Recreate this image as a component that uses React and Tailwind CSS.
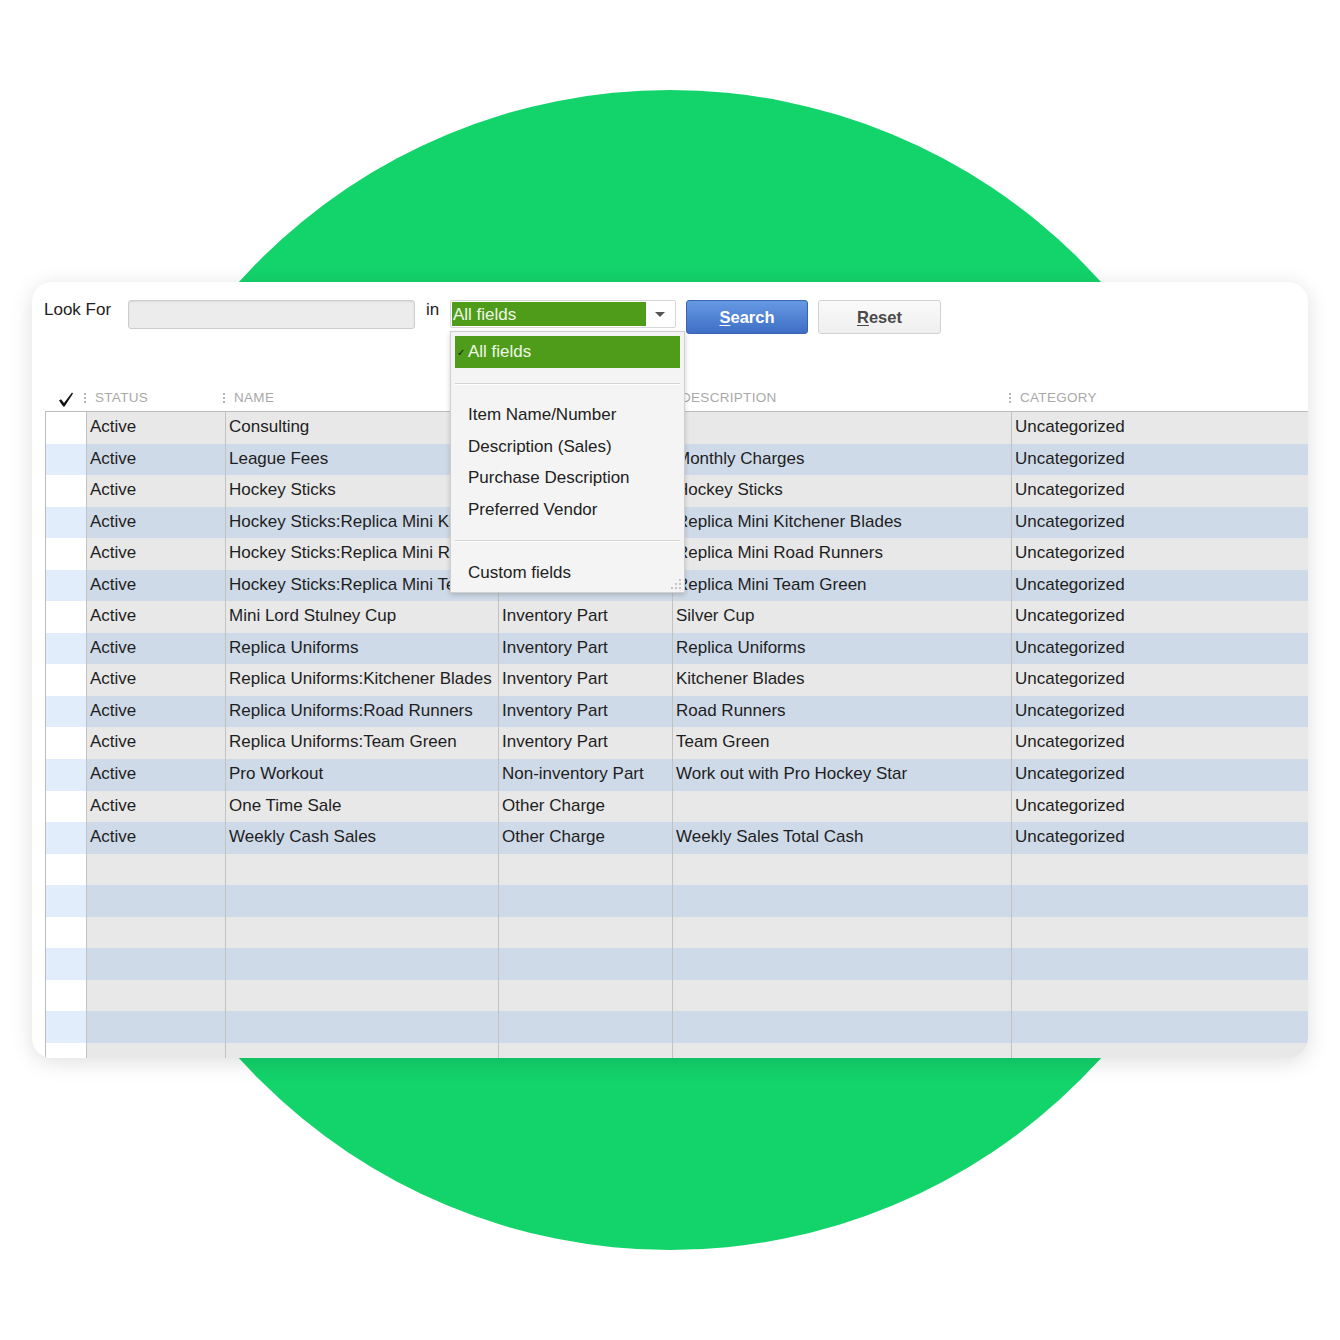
import React from 'react';

const rows = [
    ['Active', 'Consulting', 'Service', ''],
    ['Active', 'League Fees', 'Service', 'Monthly Charges'],
    ['Active', 'Hockey Sticks', 'Inventory Part', 'Hockey Sticks'],
    ['Active', 'Hockey Sticks:Replica Mini Kitchener Blades', 'Inventory Part', 'Replica Mini Kitchener Blades'],
    ['Active', 'Hockey Sticks:Replica Mini Road Runners', 'Inventory Part', 'Replica Mini Road Runners'],
    ['Active', 'Hockey Sticks:Replica Mini Team Green', 'Inventory Part', 'Replica Mini Team Green'],
    ['Active', 'Mini Lord Stulney Cup', 'Inventory Part', 'Silver Cup'],
    ['Active', 'Replica Uniforms', 'Inventory Part', 'Replica Uniforms'],
    ['Active', 'Replica Uniforms:Kitchener Blades', 'Inventory Part', 'Kitchener Blades'],
    ['Active', 'Replica Uniforms:Road Runners', 'Inventory Part', 'Road Runners'],
    ['Active', 'Replica Uniforms:Team Green', 'Inventory Part', 'Team Green'],
    ['Active', 'Pro Workout', 'Non-inventory Part', 'Work out with Pro Hockey Star'],
    ['Active', 'One Time Sale', 'Other Charge', ''],
    ['Active', 'Weekly Cash Sales', 'Other Charge', 'Weekly Sales Total Cash'],
];

const emptyRows = 7;
const cols = "grid grid-cols-[40px_139px_273px_174px_339px_1fr]";

function Divider() {
    // the little dotted grip between header labels
    return (
        <span className="flex flex-col gap-[2px] -ml-[2px] mr-[9px]">
            <span className="block w-[2px] h-[2px] bg-[#b4b4b4]"></span>
            <span className="block w-[2px] h-[2px] bg-[#b4b4b4]"></span>
            <span className="block w-[2px] h-[2px] bg-[#b4b4b4]"></span>
        </span>
    );
}

function HeaderCell({ label }) {
    return (
        <div className="flex items-center pt-[2px]">
            <Divider />
            <span className="text-[13.5px] tracking-[0.3px] text-[#a9a9a9] uppercase">{label}</span>
        </div>
    );
}

function Row({ data, idx }) {
    const even = idx % 2 === 1;
    const bg = even ? 'bg-[#cfdae8]' : 'bg-[#e8e8e8]';
    const cell = "border-l border-[#c2c2c2] pl-[3px] pb-[2px] flex items-center whitespace-nowrap overflow-hidden";
    return (
        <div className={`${cols} h-[31.55px] text-[17px] text-[#1e1e1e]`}>
            <div className={even ? 'bg-[#e1edfb]' : 'bg-white'}></div>
            <div className={`${cell} ${bg}`}>{data ? data[0] : ''}</div>
            <div className={`${cell} ${bg}`}>{data ? data[1] : ''}</div>
            <div className={`${cell} ${bg}`}>{data ? data[2] : ''}</div>
            <div className={`${cell} ${bg}`}>{data ? data[3] : ''}</div>
            <div className={`${cell} ${bg}`}>{data ? 'Uncategorized' : ''}</div>
        </div>
    );
}

export default function App() {
    const allRows = [...rows, ...Array(emptyRows).fill(null)];

    return (
        <div className="relative w-[1340px] h-[1340px] bg-white overflow-hidden font-['Liberation_Sans',Arial,sans-serif]">
            {/* green backdrop */}
            <div className="absolute left-[90px] top-[90px] w-[1160px] h-[1160px] rounded-full bg-[#13d36b]"></div>

            <div className="relative pt-[282px] pl-[32px]">
                <div className="relative w-[1276px] h-[776px] bg-white rounded-[20px] overflow-hidden shadow-[0_4px_22px_rgba(0,0,0,0.13)]">

                    {/* search toolbar */}
                    <div className="h-[101px] pt-[18px] pl-[12px] flex items-start text-[17px] text-[#222]">
                        <div className="w-[84px] leading-[20px]">Look For</div>
                        <div className="w-[287px] h-[29px] rounded-[3px] border border-[#cdcdcd] bg-[#ececec] shadow-[inset_0_1px_2px_rgba(0,0,0,0.08)]"></div>
                        <div className="ml-[11px] w-[24px] leading-[20px]">in</div>
                        <div className="w-[226px] h-[28px] rounded-[2px] border border-[#d6d6d6] bg-white flex items-center p-[1px]">
                            <div className="w-[194px] h-full bg-[#4f9c1b] text-[#eef7e6] pl-[1px] flex items-center leading-none">All fields</div>
                            <div className="flex-1 flex justify-center">
                                <svg width="10" height="5" viewBox="0 0 10 5"><path d="M0 0 H10 L5 5 Z" fill="#555" /></svg>
                            </div>
                        </div>
                        <button className="ml-[10px] w-[122px] h-[34px] rounded-[3px] border border-[#3a64ae] bg-gradient-to-b from-[#6699e3] to-[#3e6fc6] text-white font-bold text-[16.5px]">
                            <span className="underline underline-offset-2">S</span>earch
                        </button>
                        <button className="ml-[10px] w-[123px] h-[34px] rounded-[3px] border border-[#d2d2d2] bg-gradient-to-b from-[#fafafa] to-[#efefef] text-[#4a4a4a] font-bold text-[16.5px]">
                            <span className="underline underline-offset-2">R</span>eset
                        </button>
                    </div>

                    {/* column headers */}
                    <div className={`${cols} ml-[14px] h-[28px]`}>
                        <div className="flex items-center justify-center pt-[4px]">
                            <svg width="16" height="15" viewBox="0 0 16 15">
                                <path d="M1 8.5 L3 7.2 L6 11 L14 0.5 L15 1.4 L6.6 14.5 L5.2 14.5 Z" fill="#111" />
                            </svg>
                        </div>
                        <HeaderCell label="Status" />
                        <HeaderCell label="Name" />
                        <HeaderCell label="Type" />
                        <HeaderCell label="Description" />
                        <HeaderCell label="Category" />
                    </div>

                    {/* item rows */}
                    <div className="ml-[13px] border-l border-t border-[#bcbcbc]">
                        {allRows.map((r, i) => <Row key={i} data={r} idx={i} />)}
                    </div>

                    {/* open "in" dropdown */}
                    <div className="absolute left-[418px] top-[49px] w-[235px] h-[262px] bg-[#f4f4f4] border border-[#cfcfcf] shadow-[0_2px_5px_rgba(0,0,0,0.18)] p-[4px] text-[17px] text-[#222]">
                        <div className="h-[32px] bg-[#4f9c1b] flex items-center pl-[2px] text-[#eef7e6]">
                            <span className="text-[10px] text-[#111] w-[11px]">✓</span>
                            <span>All fields</span>
                        </div>
                        <div className="mt-[15px] border-t border-[#d2d2d2] border-b border-b-white"></div>
                        <div className="mt-[14px] pl-[13px]">
                            <div className="h-[31.6px] flex items-center">Item Name/Number</div>
                            <div className="h-[31.6px] flex items-center">Description (Sales)</div>
                            <div className="h-[31.6px] flex items-center">Purchase Description</div>
                            <div className="h-[31.6px] flex items-center">Preferred Vendor</div>
                        </div>
                        <div className="mt-[15px] border-t border-[#d2d2d2] border-b border-b-white"></div>
                        <div className="mt-[14px] pl-[13px] h-[32px] flex items-center">Custom fields</div>
                        <svg className="absolute right-[3px] bottom-[3px]" width="10" height="10" viewBox="0 0 10 10">
                            <rect x="8" y="0" width="2" height="2" fill="#c4c4c4" />
                            <rect x="4" y="4" width="2" height="2" fill="#c4c4c4" />
                            <rect x="8" y="4" width="2" height="2" fill="#c4c4c4" />
                            <rect x="0" y="8" width="2" height="2" fill="#c4c4c4" />
                            <rect x="4" y="8" width="2" height="2" fill="#c4c4c4" />
                            <rect x="8" y="8" width="2" height="2" fill="#c4c4c4" />
                        </svg>
                    </div>
                </div>
            </div>
        </div>
    );
}
